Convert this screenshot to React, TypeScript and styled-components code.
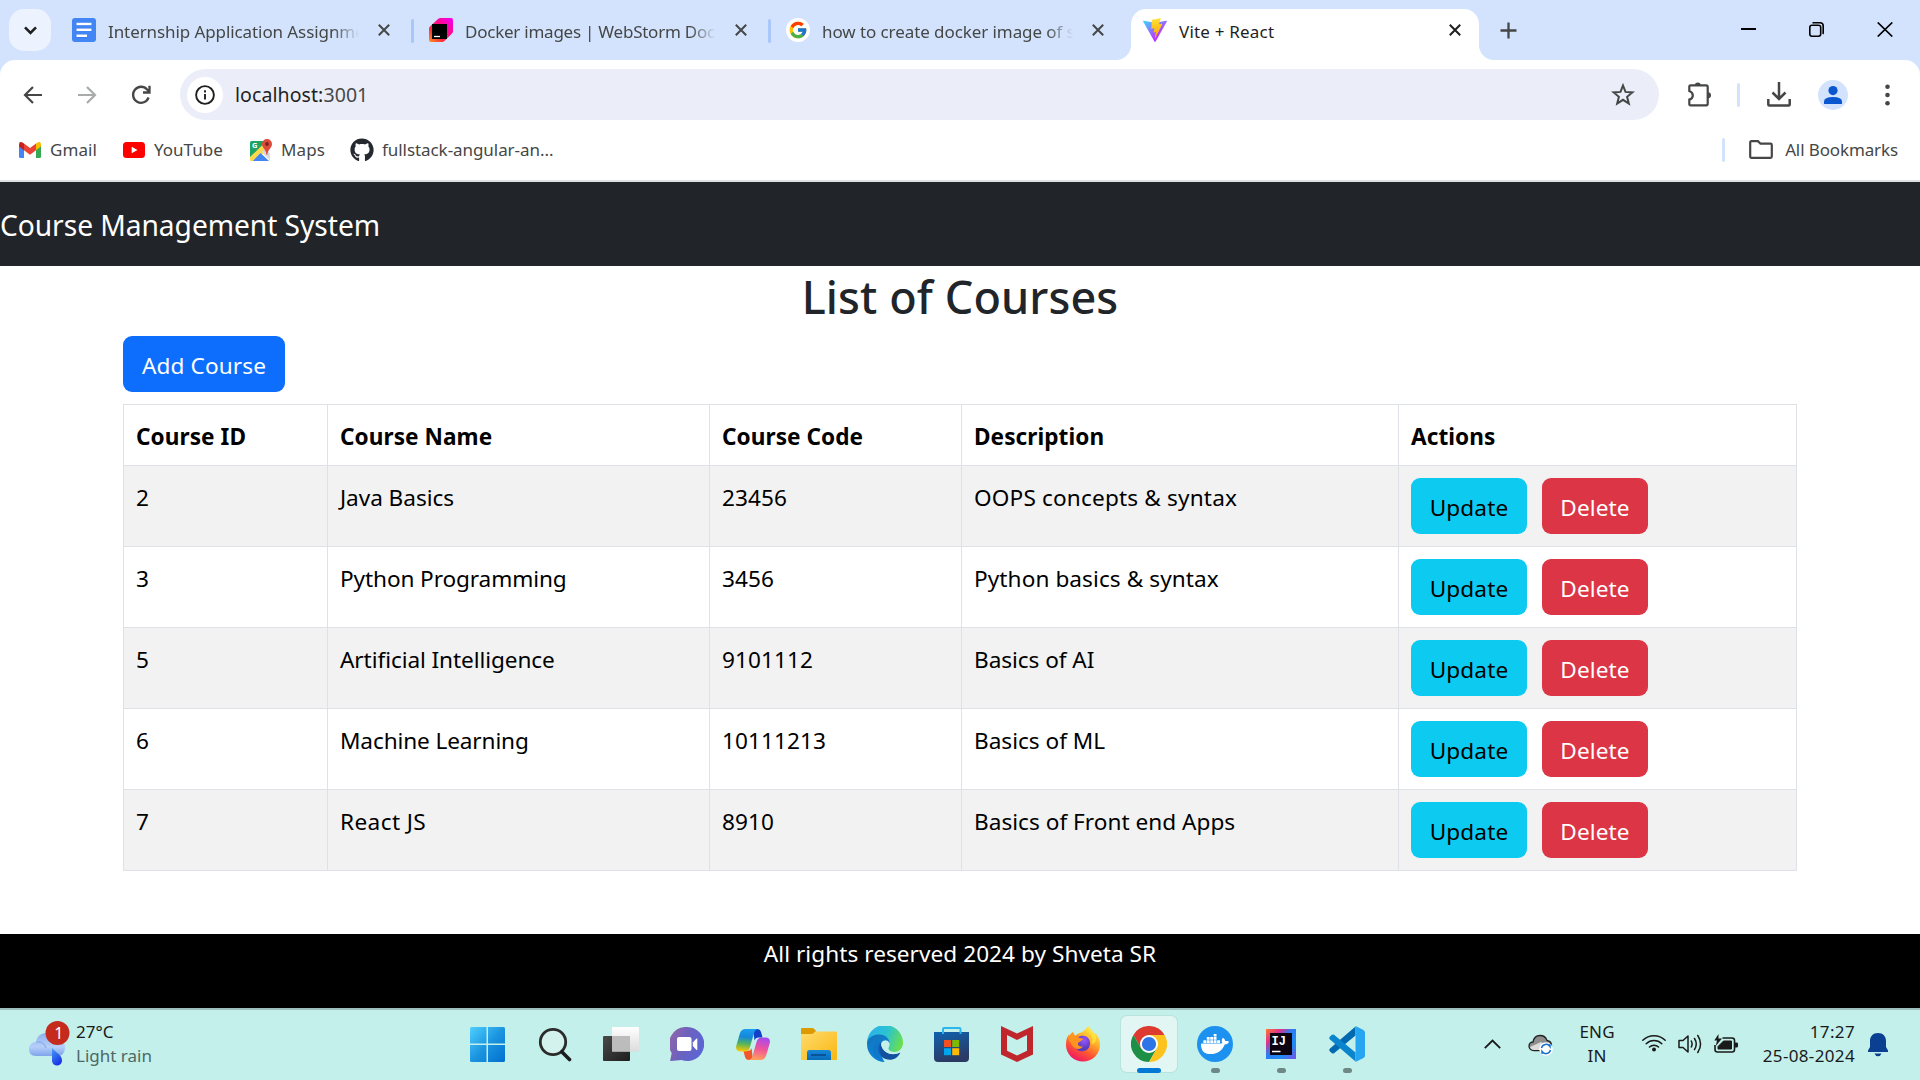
import React from "react";
import styled, { createGlobalStyle, css } from "styled-components";
import { FaGithub } from "react-icons/fa";
import { FcGoogle } from "react-icons/fc";
import { SiDocker } from "react-icons/si";

const fontStack = `"Segoe UI", "Noto Sans", "Open Sans", sans-serif`;

const GlobalStyle = createGlobalStyle`
  *, *::before, *::after { box-sizing: border-box; }
  html, body { margin: 0; padding: 0; }
  body { background: #fff; font-family: ${fontStack}; overflow: hidden; }
  svg { display: block; flex: none; }
`;

const Screen = styled.div`
  display: flex;
  flex-direction: column;
  width: 1920px;
  height: 1080px;
  overflow: hidden;
`;

/* ---------- Browser chrome ---------- */

const TabStrip = styled.header`
  display: flex;
  height: 60px;
  flex: none;
  padding-left: 9px;
  background: #d3e3fd;
  color: #454746;
`;

const TabSearch = styled.button`
  display: flex;
  align-items: center;
  justify-content: center;
  width: 42px;
  height: 42px;
  margin: 9px 6px 0 0;
  padding: 0;
  border: 0;
  border-radius: 15px;
  background: #ecf2fe;
  color: #1f1f1f;
`;

const Tab = styled.div<{ $active?: boolean; $divided?: boolean }>`
  position: relative;
  display: flex;
  align-items: center;
  width: 357px;
  height: 60px;
  padding: 0 24px 0 15px;
  ${(p) =>
    p.$divided &&
    css`
      &::after {
        content: "";
        position: absolute;
        right: 0;
        top: 19px;
        width: 3px;
        height: 24px;
        border-radius: 2px;
        background: #a8c7fa;
      }
    `}
  ${(p) =>
    p.$active &&
    css`
      width: 348px;
      height: 51px;
      margin: 9px 0 0 3px;
      padding: 0 18px 9px 12px;
      border-radius: 15px 15px 0 0;
      background: #fff;
      color: #1f1f1f;
      &::before,
      &::after {
        content: "";
        position: absolute;
        bottom: 0;
        width: 15px;
        height: 15px;
      }
      &::before {
        left: -15px;
        background: radial-gradient(circle at 0 0, transparent 14.5px, #fff 15.5px);
      }
      &::after {
        right: -15px;
        background: radial-gradient(circle at 100% 0, transparent 14.5px, #fff 15.5px);
      }
    `}
`;

const TabTitle = styled.span<{ $track?: number; $fade?: boolean }>`
  flex: 1;
  min-width: 0;
  margin: 4px 19px 0 12px;
  white-space: nowrap;
  font-size: 17px;
  line-height: 24px;
  letter-spacing: ${(p) => p.$track ?? 0}px;
  ${(p) =>
    p.$fade &&
    css`
      mask-image: linear-gradient(to right, #000 calc(100% - 26px), transparent);
    `}
`;

const NewTab = styled.div`
  display: flex;
  align-items: center;
  margin-left: 21px;
`;

const WindowButtons = styled.div`
  display: flex;
  gap: 53px;
  margin: 22px 27px 0 auto;
  color: #000;
`;

const ToolbarBack = styled.div`
  flex: none;
  background: #d3e3fd;
`;

const Toolbar = styled.div`
  display: flex;
  align-items: center;
  height: 69px;
  padding: 0 28px 0 23px;
  border-radius: 15px 15px 0 0;
  background: #fff;
  color: #454746;
`;

const NavButtons = styled.div`
  display: flex;
  gap: 34px;
  width: 157px;
`;

const Omnibox = styled.div`
  display: flex;
  align-items: center;
  width: 1479px;
  height: 51px;
  padding: 0 24px 0 7px;
  border-radius: 26px;
  background: #ebeef8;
`;

const SiteInfo = styled.div`
  display: flex;
  align-items: center;
  justify-content: center;
  width: 36px;
  height: 36px;
  border-radius: 50%;
  background: #fff;
  color: #1f1f1f;
`;

const Url = styled.span`
  flex: 1;
  margin-left: 12px;
  font-size: 19.5px;
  line-height: 28px;
  letter-spacing: 0.08px;
  color: #1f1f1f;
`;

const Port = styled.span`
  color: #474747;
`;

const Separator = styled.span<{ $gap: string }>`
  width: 3px;
  height: 24px;
  margin: ${(p) => p.$gap};
  border-radius: 2px;
  background: #d3e3fd;
`;

const ToolbarTail = styled.div`
  display: flex;
  align-items: center;
  flex: 1;
  padding-left: 28px;
`;

const Avatar = styled.div`
  display: flex;
  align-items: center;
  justify-content: center;
  width: 30px;
  height: 30px;
  margin: 0 37px 0 27px;
  border-radius: 50%;
  background: #d3e3fd;
`;

const BookmarksBar = styled.nav`
  display: flex;
  align-items: center;
  flex: none;
  height: 53px;
  padding: 0 22px 10px 19px;
  border-bottom: 2px solid #dee1e2;
  color: #454746;
`;

const Bookmark = styled.span<{ $width?: number; $gap: number; $track?: number }>`
  display: flex;
  align-items: center;
  gap: ${(p) => p.$gap}px;
  width: ${(p) => (p.$width ? `${p.$width}px` : "auto")};
  white-space: nowrap;
  font-size: 17px;
  line-height: 24px;
  letter-spacing: ${(p) => p.$track ?? 0}px;
`;

const BookmarksEnd = styled.div`
  display: flex;
  align-items: center;
  margin-left: auto;
`;

/* ---------- Web page ---------- */

const Page = styled.main`
  display: flex;
  flex-direction: column;
  flex: none;
  height: 826px;
  background: #fff;
`;

const Navbar = styled.div`
  display: flex;
  align-items: center;
  height: 84px;
  flex: none;
  padding-top: 2px;
  background: #212529;
  color: #fff;
  font-size: 28.2px;
  line-height: 42px;
  letter-spacing: -0.06px;
`;

const Container = styled.section`
  display: flex;
  flex-direction: column;
  align-items: flex-start;
  flex: 1;
  padding: 0 123px;
`;

const Heading = styled.h2`
  align-self: stretch;
  height: 70px;
  margin: 0;
  padding-top: 2px;
  text-align: center;
  color: #212529;
  font-size: 45px;
  font-weight: 500;
  line-height: 57.6px;
  letter-spacing: 0.1px;
`;

const tones = {
  primary: ["#0d6efd", "#fff"],
  info: ["#0dcaf0", "#000"],
  danger: ["#dc3545", "#fff"],
};

const Button = styled.button<{ $tone: keyof typeof tones; $width: number }>`
  width: ${(p) => p.$width}px;
  height: 56px;
  padding: 4px 0 0;
  border: 0;
  border-radius: 9px;
  background: ${(p) => tones[p.$tone][0]};
  color: ${(p) => tones[p.$tone][1]};
  font-family: inherit;
  font-size: 22.6px;
  line-height: 36px;
  letter-spacing: 0.12px;
`;

const Actions = styled.div`
  display: flex;
  gap: 15px;
  margin-top: -2px;
`;

const Table = styled.table`
  width: 1674px;
  margin-top: 12px;
  border-collapse: collapse;
  table-layout: fixed;
  color: #000;
  font-size: 22.6px;
  line-height: 36px;
  letter-spacing: 0.06px;
`;

const Col = styled.col<{ $width: number }>`
  width: ${(p) => p.$width}px;
`;

const Row = styled.tr<{ $striped?: boolean }>`
  height: 81px;
  background: ${(p) => (p.$striped ? "#f2f2f2" : "#fff")};
`;

const HeadRow = styled.tr`
  height: 61px;
`;

const cell = css`
  padding: 14px 12px 10px;
  border: 1px solid #dee2e6;
  text-align: left;
  vertical-align: top;
`;

const HeadCell = styled.th`
  ${cell}
  font-weight: 700;
`;

const Cell = styled.td<{ $track?: number }>`
  ${cell}
  letter-spacing: ${(p) => p.$track ?? 0.08}px;
`;

const Footer = styled.footer`
  flex: none;
  height: 74px;
  padding-top: 2px;
  background: #000;
  color: #fff;
  text-align: center;
  font-size: 22.6px;
  line-height: 36px;
  letter-spacing: 0.05px;
`;

/* ---------- Taskbar ---------- */

const Taskbar = styled.div`
  display: flex;
  align-items: center;
  flex: none;
  height: 72px;
  padding: 0 32px 2px 28px;
  border-top: 2px solid #9dbfbb;
  background: #c3f0ea;
  color: #1a1a1a;
`;

const Weather = styled.div`
  display: flex;
  align-items: center;
  gap: 6px;
  width: 428px;
`;

const Stack = styled.div<{ $align?: string; $left?: number; $track?: number }>`
  display: flex;
  flex-direction: column;
  align-items: ${(p) => p.$align ?? "flex-start"};
  margin-left: ${(p) => p.$left ?? 0}px;
  font-size: 17px;
  line-height: 24px;
  letter-spacing: ${(p) => p.$track ?? 0}px;
  white-space: nowrap;
`;

const TraySlot = styled.div<{ $left: number }>`
  margin: 2px 0 0 ${(p) => p.$left}px;
`;

const Muted = styled.span`
  color: #4e6865;
`;

const Apps = styled.div`
  display: flex;
`;

const AppSlot = styled.div<{ $state?: "active" | "open" }>`
  position: relative;
  display: flex;
  align-items: center;
  justify-content: center;
  width: 56px;
  height: 56px;
  margin: 0 5px;
  border-radius: 6px;
  &:first-child {
    padding-right: 3px;
  }
  ${(p) =>
    p.$state === "active" &&
    css`
      background: #e2f7f4;
      box-shadow: 0 0 0 1px #b9e3dd;
    `}
  ${(p) =>
    p.$state &&
    css`
      &::after {
        content: "";
        position: absolute;
        bottom: -1px;
        width: ${p.$state === "active" ? 24 : 9}px;
        height: 5px;
        border-radius: 3px;
        background: ${p.$state === "active" ? "#0078d4" : "#6e8885"};
      }
    `}
`;

const Tray = styled.div`
  display: flex;
  align-items: center;
  margin-left: auto;
`;

const TrayIcons = styled.div`
  display: flex;
  gap: 12px;
  margin-left: 27px;
`;

/* ---------- Chrome icons ---------- */

const stroke = { fill: "none", stroke: "currentColor" };

const CloseIcon = () => (
  <svg width="12" height="12" viewBox="0 0 12 12" {...stroke} strokeWidth="2">
    <path d="M.8.8l10.4 10.4M11.2.8L.8 11.2" />
  </svg>
);

const DocsIcon = () => (
  <svg width="24" height="24" viewBox="0 0 24 24">
    <rect width="24" height="24" rx="3" fill="#4285f4" />
    <path d="M4.5 6.2h15M4.5 11.4h15M4.5 18h10.5" stroke="#2a6be0" strokeWidth="3" />
    <path d="M4.5 6h15M4.5 11.7h15M4.5 17.7h10.5" stroke="#fff" strokeWidth="2.4" />
  </svg>
);

const JetBrainsIcon = () => (
  <svg width="24" height="24" viewBox="0 0 24 24">
    <defs>
      <linearGradient id="jb" x1="0" y1="1" x2="1" y2="0">
        <stop offset="0" stopColor="#ff9419" />
        <stop offset=".3" stopColor="#ff2f3c" />
        <stop offset=".6" stopColor="#ff0a8c" />
        <stop offset="1" stopColor="#f000ff" />
      </linearGradient>
    </defs>
    <path d="M9 1Q10 0 11.500 0H22Q24 0 24 2V13Q24 14.500 23 15.500L15.500 23Q14.500 24 13 24H2Q0 24 0 22V10.500Q0 9.500 1 8.500Z" fill="url(#jb)" />
    <path d="M3 6h15v15H3z" fill="#000" />
    <path d="M5 18.500h6" stroke="#fff" strokeWidth="1.300" />
  </svg>
);

const GoogleBadge = styled.span`
  display: flex;
  align-items: center;
  justify-content: center;
  width: 24px;
  height: 24px;
  border-radius: 50%;
  background: #fff;
`;

const ViteIcon = () => (
  <svg width="24" height="24" viewBox="0 0 256 257">
    <defs>
      <linearGradient id="va" x1="-.8%" x2="57.6%" y1="7.700%" y2="78.400%">
        <stop offset="0" stopColor="#41d1ff" />
        <stop offset="1" stopColor="#bd34fe" />
      </linearGradient>
      <linearGradient id="vb" x1="43.400%" x2="50.300%" y1="2.200%" y2="89%">
        <stop offset="0" stopColor="#ffea83" />
        <stop offset=".083" stopColor="#ffdd35" />
        <stop offset="1" stopColor="#ffa800" />
      </linearGradient>
    </defs>
    <path fill="url(#va)" d="M255.153 37.938L134.897 252.976c-2.483 4.44-8.862 4.466-11.382.048L.875 37.958c-2.746-4.814 1.371-10.646 6.827-9.67l120.385 21.517a6.537 6.537 0 0 0 2.322-.004l117.867-21.483c5.438-.991 9.574 4.796 6.877 9.62Z" />
    <path fill="url(#vb)" d="M185.432.063L96.44 17.501a3.268 3.268 0 0 0-2.634 3.014l-5.474 92.456a3.268 3.268 0 0 0 3.997 3.378l24.777-5.718c2.318-.535 4.413 1.507 3.936 3.838l-7.361 36.047c-.495 2.426 1.782 4.5 4.151 3.78l15.304-4.649c2.372-.72 4.652 1.36 4.15 3.788l-11.698 56.621c-.732 3.542 3.979 5.473 5.943 2.437l1.313-2.028l72.516-144.72c1.215-2.423-.88-5.186-3.54-4.672l-25.505 4.922c-2.396.462-4.435-1.77-3.759-4.114l16.646-57.705c.677-2.35-1.37-4.583-3.769-4.113Z" />
  </svg>
);

const GmailIcon = () => (
  <svg width="22" height="16" viewBox="0 0 22 16">
    <path d="M0 2.500L5 6v10H1.500Q0 16 0 14.500z" fill="#4285f4" />
    <path d="M22 2.500L17 6v10h3.500q1.500 0 1.500-1.500z" fill="#34a853" />
    <path d="M17 1.500L19 .3Q22-.6 22 2.500V4.600L17 8.300z" fill="#fbbc04" />
    <path d="M5 1.500L3 .3Q0-.6 0 2.500V4.600L5 8.300z" fill="#c5221f" />
    <path d="M5 1.600L11 6l6-4.400v6.700l-6 4.500-6-4.500z" fill="#ea4335" />
  </svg>
);

const YouTubeIcon = () => (
  <svg width="22" height="16" viewBox="0 0 22 16">
    <rect width="22" height="16" rx="3.500" fill="#f00" />
    <path d="M8.700 4.800L14.500 8l-5.800 3.200z" fill="#fff" />
  </svg>
);

const MapsIcon = () => (
  <svg width="22" height="22" viewBox="0 0 22 22">
    <path d="M0 3.500Q0 2 1.500 2H13L14 10 1 21.500Q0 21 0 20z" fill="#1fa463" />
    <path d="M0 18L13.500 5 18 9.500 6 22H1.500Q0 22 0 20.500z" fill="#ffd84d" />
    <path d="M10.500 14L19 22H2.800z" fill="#4285f4" />
    <path d="M14.500 10L20 14v7.500L12 13z" fill="#d8dadd" />
    <path d="M17 0a5 5 0 0 1 5 5c0 4-4 5-4.800 11h-.6C16 10 12 9 12 5a5 5 0 0 1 5-5z" fill="#dd4b3e" />
    <circle cx="17" cy="5" r="1.900" fill="#7c2419" />
    <text x="2" y="9" fontSize="7.500" fontWeight="700" fill="#fff" fontFamily="Noto Sans">G</text>
  </svg>
);

const ExtensionIcon = () => (
  <svg width="25" height="25" viewBox="0 0 25 25">
    <path d="M3.500 3.300h15.700q1.500 0 1.500 1.500v17q0 1.500-1.500 1.500H3.500q-1.200 0-1.200-1.200v-4.500q3.500-1.100 3.500-4.200T2.300 9V4.500q0-1.200 1.200-1.200z" {...stroke} strokeWidth="2.200" />
    <path d="M7.800 3.500a3 3 0 0 1 6 0zM21 10.200a3 3 0 0 1 0 6z" fill="currentColor" />
  </svg>
);

/* ---------- Taskbar icons ---------- */

const WeatherIcon = () => (
  <svg width="42" height="46" viewBox="0 0 42 46">
    <defs>
      <linearGradient id="cl" x1="0" y1="0" x2="0" y2="1">
        <stop offset="0" stopColor="#8fb0ee" />
        <stop offset=".6" stopColor="#b5cffa" />
        <stop offset="1" stopColor="#7fa4ea" />
      </linearGradient>
      <linearGradient id="dr" x1="0" y1="0" x2=".5" y2="1">
        <stop offset="0" stopColor="#45a0f5" />
        <stop offset="1" stopColor="#1a35e8" />
      </linearGradient>
    </defs>
    <path d="M8 21C9 14 14 12 19 12c6 0 9 3 11 8 4 0 7 2 7 6 0 6-3 9-7 9H8c-5 0-7-3-7-7s3-7 7-7z" fill="url(#cl)" />
    <path d="M8 21c5-.5 9 2 10 6" fill="none" stroke="#8aabe8" strokeWidth="1.200" />
    <path d="M24 27c3 4 10 7 10 12a5 5 0 0 1-10 1z" fill="url(#dr)" />
    <circle cx="29.500" cy="12" r="12" fill="#c42b1c" />
    <text x="26.300" y="18" fontSize="16" fill="#fff" fontFamily="Noto Sans">1</text>
  </svg>
);

const WindowsIcon = () => (
  <svg width="35" height="35" viewBox="0 0 35 35">
    <defs>
      <linearGradient id="wn" gradientUnits="userSpaceOnUse" x1="0" y1="0" x2="35" y2="35">
        <stop offset="0" stopColor="#4fd0ff" />
        <stop offset=".5" stopColor="#1c95e0" />
        <stop offset="1" stopColor="#0070cf" />
      </linearGradient>
    </defs>
    <path fill="url(#wn)" d="M1.500 0H16.500V16.500H0V1.500Q0 0 1.500 0zM18 0H33.500Q35 0 35 1.500V16.500H18zM0 18H16.500V35H1.500Q0 35 0 33.500zM18 18H35V33.500Q35 35 33.500 35H18z" />
  </svg>
);

const SearchIcon = () => (
  <svg width="34" height="35" viewBox="0 0 34 35">
    <circle cx="15" cy="15" r="12.700" fill="#d3f1ed" stroke="#2b2b2b" strokeWidth="2.800" />
    <path d="M24 25l7.500 7.500" stroke="#1c1c1c" strokeWidth="3.600" strokeLinecap="round" />
  </svg>
);

const TaskViewIcon = () => (
  <svg width="36" height="34" viewBox="0 0 36 34">
    <defs>
      <linearGradient id="tv" x1="0" y1="0" x2="1" y2="1">
        <stop offset="0" stopColor="#4a4a4a" />
        <stop offset="1" stopColor="#1d1d1d" />
      </linearGradient>
      <linearGradient id="tw" x1="0" y1="0" x2="0" y2="1">
        <stop offset="0" stopColor="#fff" />
        <stop offset="1" stopColor="#dcdcdc" />
      </linearGradient>
    </defs>
    <rect y="9" width="27" height="25" rx="1" fill="url(#tv)" />
    <rect x="9" width="27" height="24.500" rx="1" fill="url(#tw)" />
    <path d="M9 9h18v15.500H9z" fill="#bcbcbc" />
  </svg>
);

const ChatIcon = () => (
  <svg width="34" height="34" viewBox="0 0 34 34">
    <defs>
      <linearGradient id="ch" x1="0" y1=".2" x2="1" y2=".6">
        <stop offset="0" stopColor="#9065a8" />
        <stop offset=".5" stopColor="#6a62c0" />
        <stop offset="1" stopColor="#5a66d6" />
      </linearGradient>
    </defs>
    <path d="M17 0a17 17 0 1 1-5.500 33L1 34q-1 0-.7-1l1.400-7A17 17 0 0 1 17 0z" fill="url(#ch)" />
    <rect x="7" y="10" width="14.500" height="14" rx="2" fill="#fff" />
    <path d="M22.800 15.500L26.500 11.500h.8v11.500h-.8l-3.700-4z" fill="#fff" />
  </svg>
);

const CopilotIcon = () => (
  <svg width="34" height="31" viewBox="0 0 34 31">
    <defs>
      <linearGradient id="ca" x1=".4" y1="0" x2=".3" y2="1">
        <stop offset="0" stopColor="#1a9cf0" />
        <stop offset=".35" stopColor="#1588d8" />
        <stop offset=".65" stopColor="#54b45c" />
        <stop offset="1" stopColor="#ffc800" />
      </linearGradient>
      <linearGradient id="cb" x1=".6" y1="0" x2=".4" y2="1">
        <stop offset="0" stopColor="#a848f0" />
        <stop offset=".5" stopColor="#f0549a" />
        <stop offset="1" stopColor="#ffa25c" />
      </linearGradient>
    </defs>
    <path d="M17 0h4q3 0 4 3l1.500 5.500h-4q-3 0-4 3z" fill="#1240c8" />
    <path d="M17 31h-4q-3 0-4-3L7.500 22h4q3 0 4-3z" fill="#f2552c" />
    <path d="M9.500 0H22q-3 .5-4 4l-4 14q-1.200 4.500-5 4.500H5Q-.8 22.500.2 17L4 4Q5.500 0 9.500 0z" fill="url(#ca)" />
    <path d="M24.500 31H12.500q3-.5 4-4l4-14q1.200-4.500 5-4.500h4q5.200 0 4.300 5.500L30 27q-1.500 4-5.500 4z" fill="url(#cb)" />
  </svg>
);

const FolderIcon = () => (
  <svg width="36" height="32" viewBox="0 0 36 32">
    <defs>
      <linearGradient id="fo" x1="0" y1="0" x2="1" y2="1">
        <stop offset="0" stopColor="#ffdb6e" />
        <stop offset="1" stopColor="#f9b710" />
      </linearGradient>
      <linearGradient id="fp" x1="0" y1="0" x2="0" y2="1">
        <stop offset="0" stopColor="#1688d8" />
        <stop offset="1" stopColor="#0a6dbb" />
      </linearGradient>
    </defs>
    <path d="M1 0h10q1.500 0 2.500 1.200L15 3v6H0V1Q0 0 1 0z" fill="#dc9a00" />
    <path d="M0 6h10q2 0 3-1.200l1-1.300h21q1 0 1 1V31q0 1-1 1H1q-1 0-1-1z" fill="url(#fo)" />
    <path d="M6 32V24.500q0-2.500 2.500-2.500h19q2.500 0 2.500 2.500V32z" fill="url(#fp)" />
    <path d="M10 27h15" stroke="#0b4f94" strokeWidth="1.800" />
  </svg>
);

const EdgeIcon = () => (
  <svg width="36" height="36" viewBox="0 0 36 36">
    <defs>
      <linearGradient id="ea" x1="0" y1=".3" x2="1" y2=".6">
        <stop offset="0" stopColor="#2ab1ea" />
        <stop offset=".5" stopColor="#2bc3d2" />
        <stop offset="1" stopColor="#6be04a" />
      </linearGradient>
      <linearGradient id="eb" x1="0" y1="0" x2=".5" y2="1">
        <stop offset="0" stopColor="#1373b8" />
        <stop offset="1" stopColor="#0d86e0" />
      </linearGradient>
    </defs>
    <path d="M0 18A18 18 0 0 1 36 16c.4 6-4 10-9 10-4 0-6-1.500-6-3s1-2 1-4.500L14 10 0 18z" fill="url(#ea)" />
    <path d="M0 18C0 11 7 8.500 12 8.500c7 0 11 5 10.500 9.500C21 14.500 14 14 13.500 21S17 36 18 36A18 18 0 0 1 0 18z" fill="url(#eb)" />
    <path d="M14 16.500c-4 3-4 10 1 14.500 4 3.500 10 3.500 14 1a18 18 0 0 0 4-4.500c.5-1-.3-1.300-1-.9-8 4-17.500-.5-18-10.100z" fill="#11519f" />
    <path d="M13 21c0 9 4 15 5 15-5 0-11-4-12-9s2-10 8-11c-.8 1.500-1 3-1 5z" fill="#1070c4" opacity=".5" />
    <path d="M14 18a4.500 4.500 0 0 1 8.500-1c.7 3-1.500 4-1 6 .7 2 3 3 6 3s4.500-.5 4.500-.5l1 1.300-3 1C22 30 14.500 24.500 14 18z" fill="#c3f0ea" />
  </svg>
);

const StoreIcon = () => (
  <svg width="35" height="36" viewBox="0 0 35 36">
    <defs>
      <linearGradient id="st" x1="0" y1="0" x2=".3" y2="1">
        <stop offset="0" stopColor="#0f62b0" />
        <stop offset="1" stopColor="#2b3a63" />
      </linearGradient>
    </defs>
    <path d="M0 6h35v26q0 4-4 4H4q-4 0-4-4z" fill="url(#st)" />
    <path d="M9 8V3q0-1 1-1h15.500q1 0 1 1v5" fill="none" stroke="#2bb6ee" strokeWidth="2" />
    <path d="M10 14h7v7h-7z" fill="#f25022" />
    <path d="M18.200 14h7v7h-7z" fill="#7fba00" />
    <path d="M10 22.200h7v7h-7z" fill="#00a4ef" />
    <path d="M18.200 22.200h7v7h-7z" fill="#ffb900" />
  </svg>
);

const McAfeeIcon = () => (
  <svg width="32" height="36" viewBox="0 0 32 36">
    <path fillRule="evenodd" fill="#c0272d" d="M0 0L16 7.500 32 0V28.500L16 36 0 28.500zM6 9v15.700l10 4.800 10-4.800V9l-10 5z" />
  </svg>
);

const FirefoxIcon = () => (
  <svg width="34" height="36" viewBox="0 0 34 36">
    <defs>
      <linearGradient id="fa" x1=".8" y1=".05" x2=".3" y2="1">
        <stop offset="0" stopColor="#fff04a" />
        <stop offset=".35" stopColor="#ffb02a" />
        <stop offset=".65" stopColor="#ff5a30" />
        <stop offset="1" stopColor="#ee1268" />
      </linearGradient>
      <radialGradient id="fb" cx=".6" cy=".3">
        <stop offset="0" stopColor="#9a58ff" />
        <stop offset="1" stopColor="#5a3cc0" />
      </radialGradient>
    </defs>
    <path d="M22 0c1 4 5 5 6.500 9l1-2C33 11 34 15 34 19a17 16.500 0 0 1-34 0C0 14 1 11 3 8.500L3.500 12 7 6l2 4 4-3c4-.5 6-3 9-7z" fill="url(#fa)" />
    <path d="M12 11c8-4 12.500 2 12 7a8 8 0 0 1-15 3z" fill="url(#fb)" />
    <path d="M1.500 11.500L6.500 6l2.500 4 4-2.300-.7 3.800 4.700 1.200c0 2-4.500 2.800-5 4.800s2 3.500 5 2.800c-2 3.500-7 3.700-10 .2s-3.500-6-5.500-9z" fill="#ff9420" />
    <path d="M22 0c-1.500 7 7 9 3.500 18 4 0 5-4 4.500-9z" fill="#ffe23e" opacity=".8" />
  </svg>
);

const ChromeIcon = () => (
  <svg width="36" height="36" viewBox="0 0 36 36">
    <path d="M2.400 9A18 18 0 0 1 33.600 9H18L10.200 22.500z" fill="#dd3a30" />
    <path d="M2.400 9A18 18 0 0 0 18 36l7.800-13.500H10.200z" fill="#1e9046" />
    <path d="M33.600 9A18 18 0 0 1 18 36l7.800-13.500L18 9z" fill="#fcc31e" />
    <circle cx="18" cy="18" r="9" fill="#fff" />
    <circle cx="18" cy="18" r="7.100" fill="#2d74e8" />
  </svg>
);

const DockerBadge = styled.span`
  display: flex;
  align-items: center;
  justify-content: center;
  width: 36px;
  height: 36px;
  border-radius: 50%;
  background: #1d91f0;
  color: #fff;
`;

const IntelliJIcon = () => (
  <svg width="30" height="30" viewBox="0 0 30 30">
    <defs>
      <linearGradient id="ij" x1="0" y1="0" x2="1" y2="1">
        <stop offset="0" stopColor="#ff7a2e" />
        <stop offset=".25" stopColor="#e0318c" />
        <stop offset=".45" stopColor="#2b7cf5" />
        <stop offset=".7" stopColor="#1f8cf5" />
        <stop offset="1" stopColor="#7a52e8" />
      </linearGradient>
    </defs>
    <path d="M0 0h30v30H0z" fill="url(#ij)" />
    <path d="M4 4h22v22H4z" fill="#0c0410" />
    <text x="5.500" y="15.500" fontSize="12" fontWeight="700" fill="#fff" fontFamily="Liberation Mono">IJ</text>
    <path d="M6 22.500h8.500" stroke="#fff" strokeWidth="1.500" />
  </svg>
);

const CodeIcon = () => (
  <svg width="36" height="36" viewBox="0 0 36 36">
    <path d="M26.500 9.500v-9L1 22.500q-1.500 1.500 0 3l2 1.700q1 .6 2 0z" fill="#0069b0" />
    <path d="M26.500 26.500v9L1 13.500q-1.500-1.500 0-3l2-1.700q1-.6 2 0z" fill="#0a84cc" />
    <path d="M26.500 0L34.500 4Q36 5 36 6.500v23q0 1.500-1.500 2.500l-8 4z" fill="#27a5f0" />
  </svg>
);

const CloudSyncIcon = () => (
  <svg width="25" height="22" viewBox="0 0 25 22">
    <path d="M5 8C6 3 9 1.500 12 1.500c4 0 6 2 7 5 3 .5 4.500 2.500 4.500 5 0 3-2 5-5 5H6c-3 0-5-1.500-5-4.500S3 8 5 8z" fill="#8e8e8e" stroke="#222" strokeWidth="1.300" />
    <path d="M2 13l11-5 9 5-2 3H6q-3 0-4-3z" fill="#dcdcdc" />
    <circle cx="18" cy="15" r="6.800" fill="#fff" />
    <path d="M13.500 14a4.700 4.700 0 0 1 8.500-1.500v-2.300M22.500 16a4.700 4.700 0 0 1-8.500 1.500v2.300" fill="none" stroke="#1a6fd0" strokeWidth="1.500" />
  </svg>
);

const WifiIcon = () => (
  <svg width="24" height="18" viewBox="0 0 24 18" {...stroke} strokeWidth="1.500">
    <path d="M.8 6.300a15.800 15.800 0 0 1 22.400 0M4.200 9.700a11 11 0 0 1 15.600 0M7.500 13a6.400 6.400 0 0 1 9 0" strokeLinecap="round" />
    <circle cx="12" cy="15.500" r="2" fill="currentColor" stroke="none" />
  </svg>
);

const VolumeIcon = () => (
  <svg width="24" height="20" viewBox="0 0 24 20" {...stroke} strokeWidth="1.500" strokeLinecap="round" strokeLinejoin="round">
    <path d="M1 6.500h4l5-4.500v16l-5-4.500H1zM13.300 7q1.600 3 0 6M16.500 4.500q3.500 5.500 0 11M19.800 1.500q5.500 8.500 0 17" />
  </svg>
);

const BatteryIcon = () => (
  <svg width="24" height="20" viewBox="0 0 24 20">
    <path d="M8.500 4H18q2.500 0 2.500 2.500v9Q20.500 18 18 18H3.500Q1 18 1 15.500V11" {...stroke} strokeWidth="1.600" />
    <path d="M9.500 7h8V15H4V12.500z" fill="currentColor" stroke="currentColor" strokeLinejoin="round" />
    <path d="M21 8.500h1.500q1.500 0 1.500 1v3q0 1-1.500 1H21z" fill="currentColor" />
    <path d="M4.500 0L.3 6.500H3L1.800 12 8 4.500H4.500z" fill="currentColor" />
  </svg>
);

const BellIcon = () => (
  <svg width="20" height="24" viewBox="0 0 20 24">
    <path d="M10 0c5 0 8 3.500 8 8v6l2 3.500V19H0v-1.500L2 14V8c0-4.500 3-8 8-8zM6.500 20.500h7q-1 2.700-3.500 2.700t-3.500-2.700z" fill="#0a3f92" />
  </svg>
);

/* ---------- Data ---------- */

const courses = [
  { id: 2, name: "Java Basics", nameTrack: -0.05, code: "23456", about: "OOPS concepts & syntax", aboutTrack: 0.16 },
  { id: 3, name: "Python Programming", nameTrack: -0.1, code: "3456", about: "Python basics & syntax" },
  { id: 5, name: "Artificial Intelligence", nameTrack: -0.08, code: "9101112", about: "Basics of AI", aboutTrack: -0.05 },
  { id: 6, name: "Machine Learning", nameTrack: -0.12, code: "10111213", about: "Basics of ML", aboutTrack: 0 },
  { id: 7, name: "React JS", nameTrack: 0.4, code: "8910", about: "Basics of Front end Apps", aboutTrack: 0.02 },
];

const columns = ["Course ID", "Course Name", "Course Code", "Description", "Actions"];
const columnWidths = [204, 382, 252, 437, 398];

const apps: { icon: React.ReactNode; state?: "active" | "open" }[] = [
  { icon: <WindowsIcon /> },
  { icon: <SearchIcon /> },
  { icon: <TaskViewIcon /> },
  { icon: <ChatIcon /> },
  { icon: <CopilotIcon /> },
  { icon: <FolderIcon /> },
  { icon: <EdgeIcon /> },
  { icon: <StoreIcon /> },
  { icon: <McAfeeIcon /> },
  { icon: <FirefoxIcon /> },
  { icon: <ChromeIcon />, state: "active" },
  { icon: <DockerBadge><SiDocker size={28} /></DockerBadge>, state: "open" },
  { icon: <IntelliJIcon />, state: "open" },
  { icon: <CodeIcon />, state: "open" },
];

const BrowserChrome = () => (
  <>
    <TabStrip>
      <TabSearch>
        <svg width="13" height="9" viewBox="0 0 13 9" {...stroke} strokeWidth="2.600">
          <path d="M1 1.300l5.500 5.500L12 1.300" />
        </svg>
      </TabSearch>
      <Tab $divided>
        <DocsIcon />
        <TabTitle $fade $track={-0.09}>Internship Application Assignme</TabTitle>
        <CloseIcon />
      </Tab>
      <Tab $divided>
        <JetBrainsIcon />
        <TabTitle $fade $track={-0.24}>Docker images | WebStorm Doc</TabTitle>
        <CloseIcon />
      </Tab>
      <Tab>
        <GoogleBadge><FcGoogle size={20} /></GoogleBadge>
        <TabTitle $fade $track={-0.08}>how to create docker image of s</TabTitle>
        <CloseIcon />
      </Tab>
      <Tab $active>
        <ViteIcon />
        <TabTitle $track={0.2}>Vite + React</TabTitle>
        <CloseIcon />
      </Tab>
      <NewTab>
        <svg width="17" height="17" viewBox="0 0 17 17" {...stroke} strokeWidth="2.300">
          <path d="M8.500 .5v16M.5 8.500h16" />
        </svg>
      </NewTab>
      <WindowButtons>
        <svg width="15" height="15" viewBox="0 0 15 15"><path d="M0 6h15v2H0z" /></svg>
        <svg width="15" height="15" viewBox="0 0 15 15" {...stroke} strokeWidth="1.600">
          <rect x=".8" y="3.300" width="10.900" height="10.900" rx="2.200" />
          <path d="M3.500 1Q4 .8 5 .8h6q3.200 0 3.200 3.200v6.500q0 .8-.4 1.500" />
        </svg>
        <svg width="16" height="15" viewBox="0 0 16 15" {...stroke} strokeWidth="1.700">
          <path d="M.7.500l14.600 14M15.300.5L.7 14.500" />
        </svg>
      </WindowButtons>
    </TabStrip>
    <ToolbarBack>
      <Toolbar>
        <NavButtons>
          <svg width="20" height="20" viewBox="0 0 20 20" {...stroke} strokeWidth="2.200">
            <path d="M19 10H2.500M10 2L2 10l8 8" />
          </svg>
          <svg width="20" height="20" viewBox="0 0 20 20" fill="none" stroke="#a9aaaa" strokeWidth="2.200">
            <path d="M1 10h16.500M10 2l8 8-8 8" />
          </svg>
          <svg width="20" height="20" viewBox="0 0 20 20" {...stroke} strokeWidth="2.300">
            <path d="M17.600 12.500a8 8 0 1 1-1.500-8l2.400 2.500M18.500 .8V7.500H12" />
          </svg>
        </NavButtons>
        <Omnibox>
          <SiteInfo>
            <svg width="20" height="20" viewBox="0 0 20 20" {...stroke} strokeWidth="1.900">
              <circle cx="10" cy="10" r="8.900" />
              <path d="M10 9v5.600M10 5.200v2.200" />
            </svg>
          </SiteInfo>
          <Url>localhost:<Port>3001</Port></Url>
          <svg width="24" height="23" viewBox="0 0 24 23" {...stroke} strokeWidth="2">
            <path d="M12 2.500l2.500 6.400 6.900.5-5.300 4.400 1.700 6.700L12 16.800l-5.800 3.700 1.700-6.700L2.600 9.400l6.900-.5z" />
          </svg>
        </Omnibox>
        <ToolbarTail>
          <ExtensionIcon />
          <Separator $gap="0 27px 0 25px" />
          <svg width="24" height="25" viewBox="0 0 24 25" {...stroke} strokeWidth="2.500">
            <path d="M12 0v16M5.500 10.500L12 17l6.500-6.500M1.300 17v5.500q0 1 1 1h19.400q1 0 1-1V17" />
          </svg>
          <Avatar>
            <svg width="18" height="18" viewBox="0 0 18 18" fill="#0b57d0">
              <circle cx="9" cy="4.600" r="4.600" />
              <path d="M0 18v-2.500Q0 11 9 11t9 4.500V18z" />
            </svg>
          </Avatar>
          <svg width="5" height="22" viewBox="0 0 5 22" fill="currentColor">
            <circle cx="2.500" cy="2.700" r="2.300" />
            <circle cx="2.500" cy="11" r="2.300" />
            <circle cx="2.500" cy="19.300" r="2.300" />
          </svg>
        </ToolbarTail>
      </Toolbar>
    </ToolbarBack>
    <BookmarksBar>
      <Bookmark $width={104} $gap={9} $track={0.1}><GmailIcon />Gmail</Bookmark>
      <Bookmark $width={127} $gap={9}><YouTubeIcon />YouTube</Bookmark>
      <Bookmark $width={100} $gap={9} $track={0.1}><MapsIcon />Maps</Bookmark>
      <Bookmark $gap={8} $track={-0.06}><FaGithub size={24} color="#24292f" />fullstack-angular-an...</Bookmark>
      <BookmarksEnd>
        <Separator $gap="0 24px 0 0" />
        <Bookmark $gap={12} $track={-0.12}>
          <svg width="24" height="19" viewBox="0 0 24 19" {...stroke} strokeWidth="2.200">
            <path d="M1.200 2.500q0-1.300 1.300-1.300H9l2.500 2.500h10q1.300 0 1.300 1.300v11.500q0 1.300-1.300 1.300h-19q-1.300 0-1.300-1.300z" />
          </svg>
          All Bookmarks
        </Bookmark>
      </BookmarksEnd>
    </BookmarksBar>
  </>
);

const CoursesPage = () => (
  <Page>
    <Navbar>Course Management System</Navbar>
    <Container>
      <Heading>List of Courses</Heading>
      <Button $tone="primary" $width={162}>Add Course</Button>
      <Table>
        <colgroup>
          {columnWidths.map((w, i) => <Col key={i} $width={w} />)}
        </colgroup>
        <thead>
          <HeadRow>
            {columns.map((c) => <HeadCell key={c}>{c}</HeadCell>)}
          </HeadRow>
        </thead>
        <tbody>
          {courses.map((c, i) => (
            <Row key={c.id} $striped={i % 2 === 0}>
              <Cell>{c.id}</Cell>
              <Cell $track={c.nameTrack}>{c.name}</Cell>
              <Cell>{c.code}</Cell>
              <Cell $track={c.aboutTrack}>{c.about}</Cell>
              <Cell>
                <Actions>
                  <Button $tone="info" $width={116}>Update</Button>
                  <Button $tone="danger" $width={106}>Delete</Button>
                </Actions>
              </Cell>
            </Row>
          ))}
        </tbody>
      </Table>
    </Container>
    <Footer>All rights reserved 2024 by Shveta SR</Footer>
  </Page>
);

const SystemTaskbar = () => (
  <Taskbar>
    <Weather>
      <WeatherIcon />
      <Stack>
        <span>27°C</span>
        <Muted>Light rain</Muted>
      </Stack>
    </Weather>
    <Apps>
      {apps.map((a, i) => <AppSlot key={i} $state={a.state}>{a.icon}</AppSlot>)}
    </Apps>
    <Tray>
      <svg width="17" height="10" viewBox="0 0 17 10" {...stroke} strokeWidth="1.800">
        <path d="M.8 9.200L8.500 1.500l7.700 7.700" />
      </svg>
      <TraySlot $left={27}><CloudSyncIcon /></TraySlot>
      <Stack $align="center" $left={26} $track={0.2}>
        <span>ENG</span>
        <span>IN</span>
      </Stack>
      <TrayIcons>
        <WifiIcon />
        <VolumeIcon />
        <BatteryIcon />
      </TrayIcons>
      <Stack $align="flex-end" $left={25} $track={0.35}>
        <span>17:27</span>
        <span>25-08-2024</span>
      </Stack>
      <TraySlot $left={13}><BellIcon /></TraySlot>
    </Tray>
  </Taskbar>
);

export default function App() {
  return (
    <Screen>
      <GlobalStyle />
      <BrowserChrome />
      <CoursesPage />
      <SystemTaskbar />
    </Screen>
  );
}
